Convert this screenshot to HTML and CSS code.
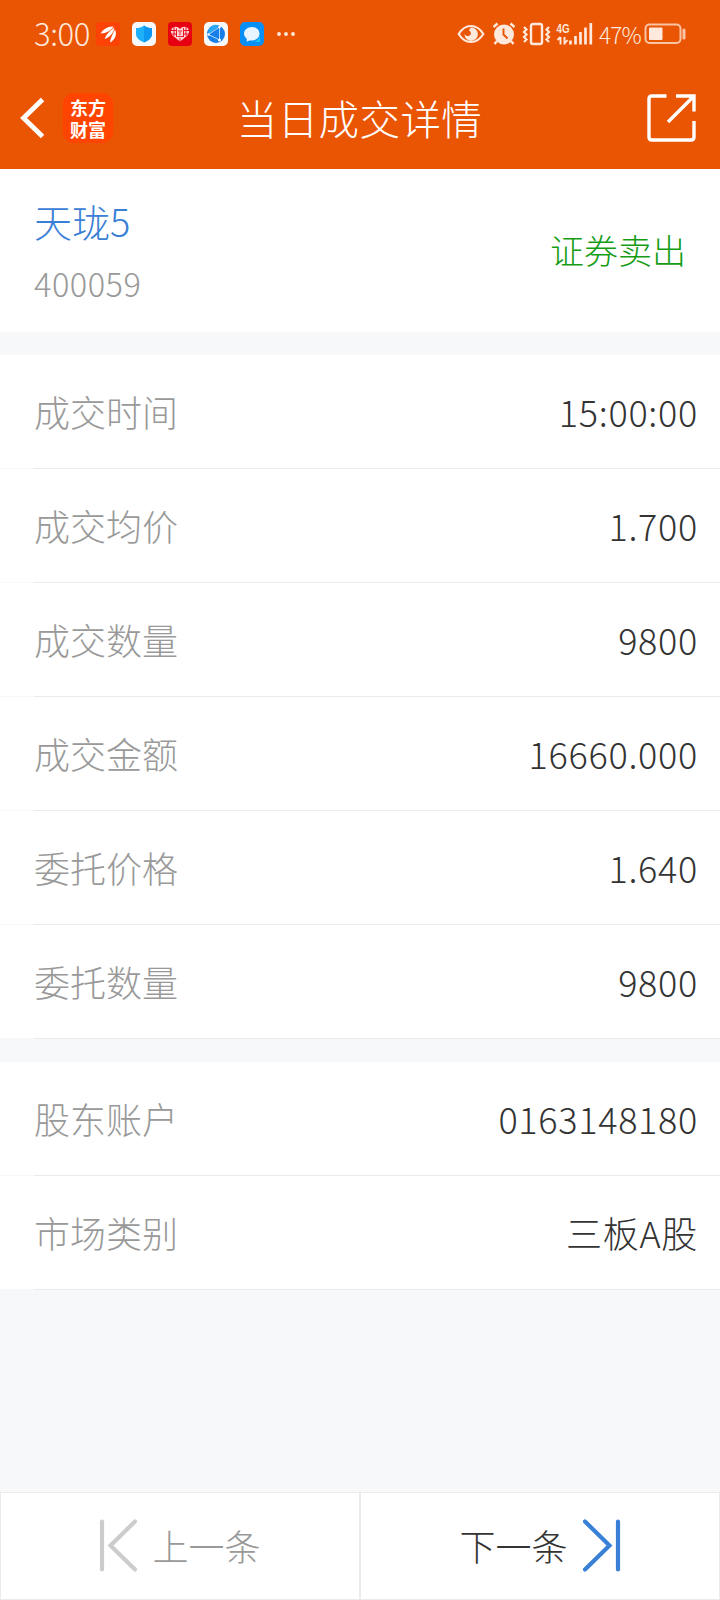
FILE: index.html
```html
<!DOCTYPE html>
<html lang="zh-CN">
<head>
    <meta charset="UTF-8">
    <meta name="viewport" content="width=device-width, initial-scale=1.0">
    <title>当日成交详情</title>
    <link rel="stylesheet" href="styles.css">
</head>
<body>

    <header class="header">
        <div class="status">
            <span class="time">3:00</span>
            <div class="apps">
                <svg width="24" height="24" viewBox="0 0 24 24"><rect width="24" height="24" rx="4" fill="#fc4204"/><path d="M4.500 11.500C7 7.500 12 4 17.500 4.500C15 8.500 10.500 11.500 4.500 11.500ZM8.500 17C10 12.500 14 8.500 18.300 5.500C18 10.500 14 15.500 8.500 17ZM14 20.500C14.500 15.500 17 11.500 19 7.500C21.500 12.500 18.500 18.500 14 20.500Z" fill="#fff"/></svg>
                <svg width="24" height="24" viewBox="0 0 24 24"><rect width="24" height="24" rx="5" fill="#f6f8fa"/><path d="M12 3.500C14.500 5.500 17 6 20 6V12C20 16 16 19 12 20.500C8 19 4 16 4 12V6C7 6 9.500 5.500 12 3.500Z" fill="#1fb0fa"/><path d="M12 3.500C14.500 5.500 17 6 20 6V12C20 16 16 19 12 20.500Z" fill="#0f98f2"/></svg>
                <svg width="24" height="24" viewBox="0 0 24 24"><rect width="24" height="24" rx="4" fill="#e60012"/><path d="M12 19.500L4 13C1.500 9 4 4.500 7.500 4.800C10 5 11 6 12 7C13 6 14 5 16.500 4.800C20 4.500 22.500 9 20 13Z" fill="#fbd5d5"/><path d="M3 8.500H8M3 12H9M6 5V14M8.500 6.500V15M10 9H14M12 10V13M9.500 14.500H15M12 16V19M15.500 6V15M18 5V14M16 8.500H21M15 12H21" stroke="#e60012" stroke-width="0.900" fill="none"/></svg>
                <svg width="24" height="24" viewBox="0 0 24 24"><rect width="24" height="24" rx="5" fill="#f6f8fa"/><circle cx="12" cy="12" r="9" fill="#187fe8"/><path d="M5 6.500A9 9 0 0 1 15.500 3.700L4 12.500Z" fill="#2ba8f2"/><path d="M15.500 5V18M15.500 5L4.500 12.500L15.500 18" stroke="#bfe4ff" stroke-width="0.900" fill="none"/><circle cx="15.500" cy="5" r="1.300" fill="#fff"/><circle cx="15.500" cy="18" r="1.500" fill="#fff"/><circle cx="4.500" cy="12.500" r="1.200" fill="#fff"/></svg>
                <svg width="24" height="24" viewBox="0 0 24 24"><rect width="24" height="24" rx="5" fill="#078ff5"/><path d="M20 13V20H14C17 19 19.500 16.500 20 13Z" fill="#13c5fa"/><path d="M12 5C16.500 5 19.500 8 19.500 11.500C19.500 15.500 16 18.500 12 18.500C10.500 18.500 9.500 18.200 8.500 19C7.500 19.500 7 19.500 6.500 19.200C7 18.500 7 17.500 6.500 16.500C5 15 4 13.500 4 11.500C4 8 7.500 5 12 5Z" fill="#e8f5ff"/></svg>
                <svg class="more" width="20" height="24" viewBox="0 0 20 24" fill="#ffe9dc"><circle cx="3" cy="12" r="1.900"/><circle cx="10" cy="12" r="1.900"/><circle cx="17" cy="12" r="1.900"/></svg>
            </div>
            <svg class="signals" width="136" height="24" viewBox="0 0 136 24" fill="none" stroke="#ffe9dc">
                <!-- eye, alarm, vibrate, mobile signal -->
                <path d="M1.700 12C5 6.500 9.500 4 14 4S23 6.500 26.300 12C23 17.500 18.500 20 14 20S5 17.500 1.700 12Z" stroke-width="2.200"/>
                <path d="M14.500 5.500A6.700 6.700 0 1 1 7.500 12C9 14.500 12 14.500 13.300 13C14.500 11.500 14 9.500 12 8.500C12.500 7 13 6 14.500 5.500Z" fill="#ffe9dc" stroke="none"/>
                <circle cx="47" cy="12.500" r="10" fill="#ffe9dc" stroke="none"/>
                <path d="M36.500 5L40.500 1.500M57.500 5L53.500 1.500M40 19L37.500 22M54 19L56.500 22" stroke-width="2.400"/>
                <path d="M46.500 6.500V12.500L50.500 16.500" stroke="#ea5504" stroke-width="1.900"/>
                <rect x="74" y="2" width="11" height="20" rx="2" stroke-width="2.400"/>
                <path d="M67 5L69.500 7.500L67 10L69.500 12.500L67 15L69.500 17.500L67 20M92 5L89.500 7.500L92 10L89.500 12.500L92 15L89.500 17.500L92 20" stroke-width="2.200"/>
                <path d="M103.500 15V22.500M103.500 15L100.500 18M107.500 15V22.500M107.500 21.500L110.500 18" stroke-width="1.900"/>
                <path d="M113.500 18.500V22.500M118.500 14V22.500M123.500 10V22.500M128.500 5.500V22.500M133.800 1V22.500" stroke-width="2.700"/>
                <text class="net" x="99.500" y="10.500" textLength="13" lengthAdjust="spacingAndGlyphs">4G</text>
            </svg>
            <span class="percent">47%</span>
            <svg class="battery" width="42" height="22" viewBox="0 0 42 22" fill="none"><rect x="1.500" y="1.500" width="35" height="18.500" rx="4" stroke="#f9c4a4" stroke-width="2"/><rect x="5" y="4.500" width="13.500" height="12.500" rx="1" fill="#ffe9dc"/><rect x="38.500" y="5.500" width="3" height="11" rx="1.500" fill="#f9c4a4"/></svg>
        </div>
        <nav class="nav">
            <div class="nav-left">
                <svg class="back" width="26" height="42" viewBox="0 0 26 42"><path d="M24.500 2.500L5.500 21L24.500 39.500" fill="none" stroke="#fff" stroke-width="4.800"/></svg>
                <div class="logo">东方<br>财富</div>
            </div>
            <h1 class="title">当日成交详情</h1>
            <svg class="share" width="50" height="50" viewBox="0 0 50 50" fill="none" stroke="#fff" stroke-width="3.400"><path d="M20.500 3H6Q3 3 3 6V44Q3 47 6 47H45Q48 47 48 44V28M30 3H48V18.500M22 29L48 3"/></svg>
        </nav>
    </header>

    <section class="summary">
        <div>
            <div class="name">天珑5</div>
            <div class="code">400059</div>
        </div>
        <div class="side">证券卖出</div>
    </section>

    <section class="group">
        <div class="row"><span class="label">成交时间</span><span class="value">15:00:00</span></div>
        <div class="row"><span class="label">成交均价</span><span class="value">1.700</span></div>
        <div class="row"><span class="label">成交数量</span><span class="value">9800</span></div>
        <div class="row"><span class="label">成交金额</span><span class="value">16660.000</span></div>
        <div class="row"><span class="label">委托价格</span><span class="value">1.640</span></div>
        <div class="row"><span class="label">委托数量</span><span class="value">9800</span></div>
    </section>

    <section class="group">
        <div class="row"><span class="label">股东账户</span><span class="value">0163148180</span></div>
        <div class="row"><span class="label">市场类别</span><span class="value">三板A股</span></div>
    </section>

    <footer class="pager">
        <div class="page prev">
            <svg width="38" height="54" viewBox="0 0 38 54" fill="none" stroke="#ccc" stroke-width="4.200" stroke-linecap="round"><path d="M3 2.500V50.500M36 2.500L11.500 26.500L36 50.500"/></svg>
            <span>上一条</span>
        </div>
        <div class="page next">
            <span>下一条</span>
            <svg width="38" height="54" viewBox="0 0 38 54" fill="none" stroke="#3a80d6" stroke-width="4.200" stroke-linecap="round"><path d="M35 2.500V50.500M2 2.500L26.500 26.500L2 50.500"/></svg>
        </div>
    </footer>

</body>
</html>
```
FILE: styles.css
```css
* {
    box-sizing: border-box;
}
body {
    margin: 0;
    height: 1600px;
    display: flex;
    flex-direction: column;
    background-color: #f7f8fa;
    font-family: "Noto Sans CJK SC", sans-serif;
    font-weight: 300;
    color: #333;
}
.header {
    height: 169px;
    background-color: #ea5504;
    color: #fff;
}
.status {
    display: flex;
    align-items: center;
    height: 68px;
    padding: 0 34px;
    color: #ffe9dc;
}
.time {
    width: 62px;
    padding-bottom: 4px;
    font-size: 31px;
    letter-spacing: -0.4px;
}
.apps {
    display: flex;
    gap: 12px;
}
.signals {
    margin-left: auto;
}
.net {
    font: bold 12px "Liberation Sans", sans-serif;
    fill: #ffe9dc;
    stroke: none;
}
.percent {
    width: 45px;
    margin-left: 6px;
    font-size: 22.500px;
    letter-spacing: -0.8px;
}
.nav {
    display: grid;
    grid-template-columns: 200px 1fr 200px;
    align-items: center;
    height: 100px;
    padding: 0 24px 0 18px;
}
.nav-left {
    display: flex;
    align-items: center;
    gap: 19px;
}
.logo {
    width: 50px;
    height: 50px;
    padding-top: 3px;
    border-radius: 11px;
    background-color: #ff4400;
    font-size: 18px;
    font-weight: 700;
    line-height: 22px;
    text-align: center;
}
.title {
    margin: 0;
    padding: 0 0 2px 5px;
    font-size: 40.500px;
    font-weight: 300;
    letter-spacing: 0.4px;
    text-align: center;
    white-space: nowrap;
}
.share {
    justify-self: end;
}
.summary {
    display: flex;
    justify-content: space-between;
    align-items: center;
    height: 163px;
    padding: 0 34px;
    background-color: #fff;
}
.name {
    padding-top: 3px;
    font-size: 38px;
    line-height: 60px;
    color: #3a80d6;
}
.code {
    padding-top: 1px;
    font-size: 32.500px;
    line-height: 62px;
    letter-spacing: 0.5px;
    color: #999;
}
.side {
    padding-bottom: 3px;
    font-size: 34px;
    color: #149c14;
}
.group {
    margin-top: 23px;
    background-color: #fff;
}
.row {
    display: flex;
    justify-content: space-between;
    align-items: center;
    height: 114px;
    padding: 0 22px 3px 34px;
    background: linear-gradient(to right, #f7f8fa 34px, #ebebeb 34px) 0 100% / 100% 1px no-repeat;
    font-size: 36px;
}
.label {
    color: #999;
}
.value {
    letter-spacing: 0.7px;
}
.pager {
    display: flex;
    height: 108px;
    margin-top: auto;
}
.page {
    flex: 1;
    display: flex;
    align-items: center;
    justify-content: center;
    gap: 15px;
    border: 1px solid #ebebeb;
    background-color: #fff;
    font-size: 36px;
}
.page span {
    padding-bottom: 3px;
}
.prev {
    color: #999;
}
```
